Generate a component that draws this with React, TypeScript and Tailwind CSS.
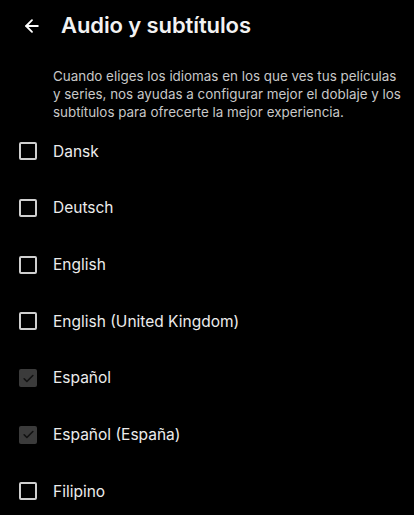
import { ArrowLeft } from "lucide-react";

const LANGS = [
  { label: "Dansk", checked: false },
  { label: "Deutsch", checked: false },
  { label: "English", checked: false },
  { label: "English (United Kingdom)", checked: false },
  { label: "Español", checked: true },
  { label: "Español (España)", checked: true },
  { label: "Filipino", checked: false },
];

function Box({ checked }: { checked: boolean }) {
  if (checked) {
    return (
      <span className="flex h-[18px] w-[18px] items-center justify-center rounded-[2px] bg-[#3b3b3b]">
        <svg width="13" height="13" viewBox="0 0 24 24" fill="none" stroke="#111" strokeWidth="3" strokeLinecap="round" strokeLinejoin="round">
          <path d="M4 12.5l5 5L20 6.5" />
        </svg>
      </span>
    );
  }
  return <span className="block h-[18px] w-[18px] rounded-[2px] border-2 border-[#cfcfcf]" />;
}

export default function App() {
  return (
    <div
      className="h-[515px] w-[414px] overflow-hidden bg-black text-white"
      style={{ fontFamily: "Inter, 'Noto Sans', sans-serif" }}
    >
      <div className="flex h-[50px] items-center pl-[22px] pt-[1px]">
        <ArrowLeft size={20} strokeWidth={2.2} className="text-white" />
        <h1 className="ml-[19px] text-[22px] font-semibold tracking-[-0.1px] text-[#f2f2f2]">
          Audio y subtítulos
        </h1>
      </div>
      <p className="ml-[53px] mr-[10px] mt-[17px] text-[13.4px] leading-[18px] text-[#c8c8c8]">
        Cuando eliges los idiomas en los que ves tus películas y series, nos ayudas a configurar mejor el doblaje y los subtítulos para ofrecerte la mejor experiencia.
      </p>
      <ul className="mt-[2px]">
        {LANGS.map((l) => (
          <li key={l.label} className="flex h-[56.7px] items-center pl-[19px]">
            <Box checked={l.checked} />
            <span className="ml-[16px] text-[15.5px] text-[#ececec]">{l.label}</span>
          </li>
        ))}
      </ul>
    </div>
  );
}
